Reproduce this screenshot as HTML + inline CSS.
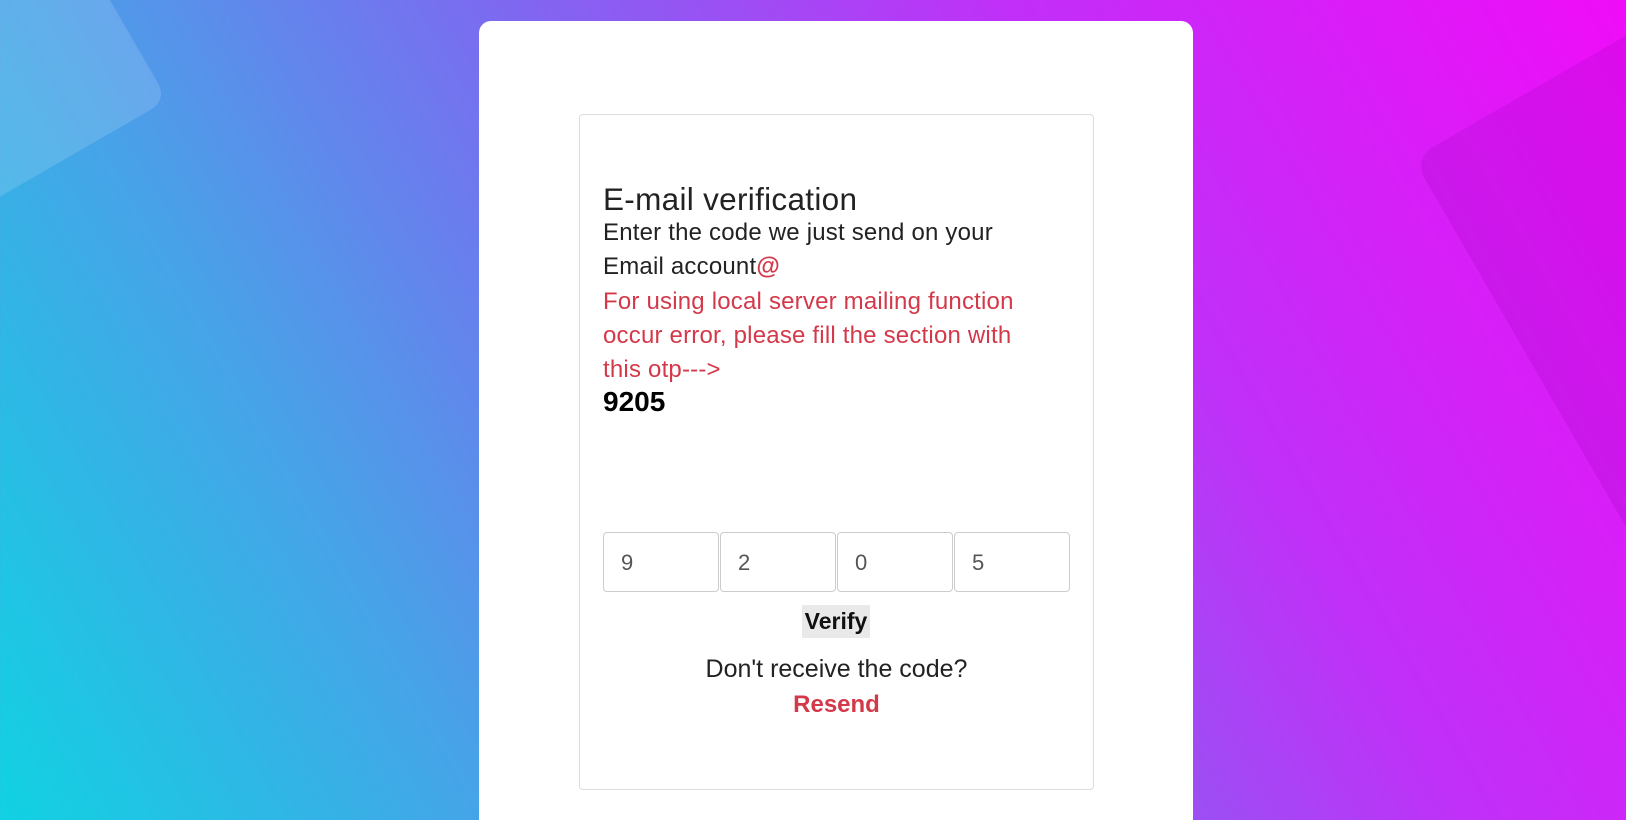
<!DOCTYPE html>
<html><head><style>
html,body{margin:0;padding:0;width:1626px;height:820px;overflow:hidden}
body{position:relative;background:linear-gradient(60deg,#10d2e2 0%,#4aa0e8 25%,#7a6cf0 45%,#c030f8 70%,#f00cf8 100%);font-family:"Liberation Sans",sans-serif}
.s1{position:absolute;left:-150px;top:-115px;width:260px;height:300px;background:rgba(255,255,255,.14);transform:rotate(-30deg);border-radius:18px}
.s2{position:absolute;left:1510px;top:20px;width:420px;height:500px;background:rgba(120,0,160,.15);transform:rotate(-30deg);border-radius:22px}
.card{position:absolute;left:479px;top:21px;width:714px;height:820px;background:#fff;border-radius:12px}
.box{position:absolute;left:100px;top:93px;width:513px;height:674px;border:1px solid #ddd;border-radius:4px}
.t{position:absolute;left:23px;color:#222;white-space:nowrap}
h1{position:absolute;left:23px;top:66px;margin:0;font-weight:normal;font-size:31.5px;color:#222;letter-spacing:.3px}
.p{font-size:24px;line-height:34px;letter-spacing:.2px}
.red{color:#d4394a}
.otp{position:absolute;left:23px;top:417px;display:flex}
.otp div{width:116px;height:60px;border:1px solid #ccc;border-radius:4px;box-sizing:border-box;font-size:22px;color:#555;padding:17px 0 0 17px;margin-right:1px}
</style></head><body>
<div class="s1"></div><div class="s2"></div>
<div class="card"><div class="box">
<h1>E-mail verification</h1>
<div class="t p" style="top:101px">Enter the code we just send on your<br>Email account<span class="red" style="font-weight:bold">@</span></div>
<div class="t p red" style="top:170px">For using local server mailing function<br>occur error, please fill the section with<br>this otp---&gt;</div>
<div class="t" style="top:271px;font-size:28px;font-weight:bold;color:#000">9205</div>
<div class="otp"><div>9</div><div>2</div><div>0</div><div>5</div></div>
<div style="position:absolute;left:222px;top:490px;width:68px;height:33px;background:#e9e9e9;font-size:23px;font-weight:bold;text-align:center;line-height:33px;color:#111">Verify</div>
<div style="position:absolute;left:0;width:100%;top:540px;text-align:center;font-size:25px;color:#222">Don't receive the code?</div>
<div style="position:absolute;left:0;width:100%;top:576px;text-align:center;font-size:24px;font-weight:bold;color:#d4394a">Resend</div>
</div></div>
</body></html>
